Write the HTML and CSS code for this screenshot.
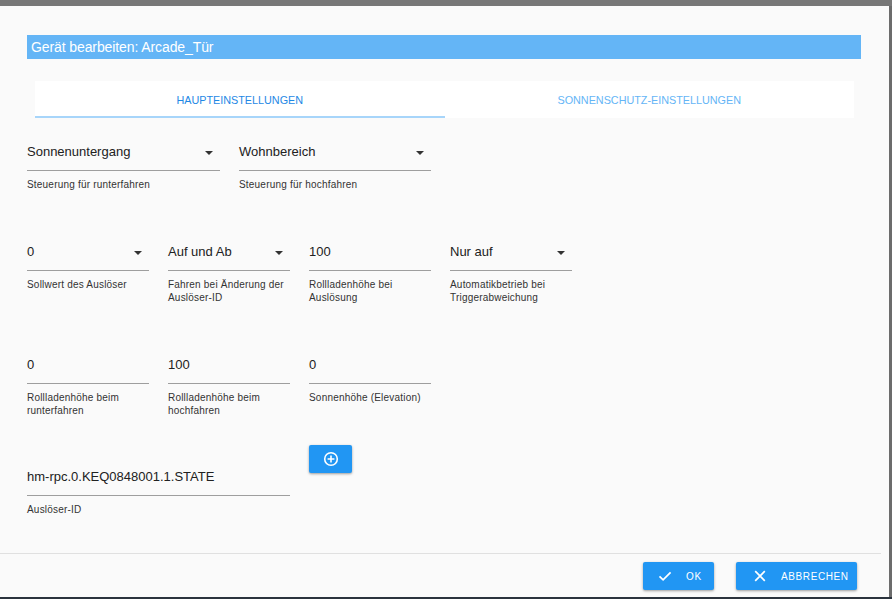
FILE: index.html
```html
<!DOCTYPE html>
<html lang="de">
<head>
<meta charset="utf-8">
<title>Gerät bearbeiten</title>
<link rel="stylesheet" href="styles.css">
</head>
<body>
<div class="topbar"></div>
<div class="frame">
  <div class="dialog">
    <div class="content">
      <div class="title">Gerät bearbeiten: Arcade_Tür</div>
      <div class="tabs">
        <div class="tab active">Haupteinstellungen</div>
        <div class="tab">Sonnenschutz-Einstellungen</div>
      </div>

      <div class="row">
        <div class="field wide select">
          <div class="value">Sonnenuntergang</div>
          <div class="label">Steuerung für runterfahren</div>
        </div>
        <div class="field wide select">
          <div class="value">Wohnbereich</div>
          <div class="label">Steuerung für hochfahren</div>
        </div>
      </div>

      <div class="row">
        <div class="field select">
          <div class="value">0</div>
          <div class="label">Sollwert des Auslöser</div>
        </div>
        <div class="field select">
          <div class="value">Auf und Ab</div>
          <div class="label">Fahren bei Änderung der Auslöser-ID</div>
        </div>
        <div class="field">
          <div class="value">100</div>
          <div class="label">Rollladenhöhe bei Auslösung</div>
        </div>
        <div class="field select">
          <div class="value">Nur auf</div>
          <div class="label">Automatikbetrieb bei Triggerabweichung</div>
        </div>
      </div>

      <div class="row">
        <div class="field">
          <div class="value">0</div>
          <div class="label">Rollladenhöhe beim runterfahren</div>
        </div>
        <div class="field">
          <div class="value">100</div>
          <div class="label">Rollladenhöhe beim hochfahren</div>
        </div>
        <div class="field">
          <div class="value">0</div>
          <div class="label">Sonnenhöhe (Elevation)</div>
        </div>
      </div>

      <div class="row row-last">
        <div class="field double offset">
          <div class="value">hm-rpc.0.KEQ0848001.1.STATE</div>
          <div class="label">Auslöser-ID</div>
        </div>
        <button class="btn add-btn" type="button" aria-label="Hinzufügen">
          <svg width="16" height="16" viewBox="0 0 16 16"><circle cx="8" cy="8" r="6.3" fill="none" stroke="#fff" stroke-width="1.6"/><path d="M8 4.6v6.8M4.6 8h6.8" stroke="#fff" stroke-width="1.6"/></svg>
        </button>
      </div>
    </div>

    <div class="footer">
      <button class="btn action ok" type="button">
        <svg width="14" height="14" viewBox="0 0 14 14"><path d="M1.5 7.3l3.6 3.6L12.6 3.4" fill="none" stroke="#fff" stroke-width="1.7"/></svg>
        <span>OK</span>
      </button>
      <button class="btn action cancel" type="button">
        <svg width="14" height="14" viewBox="0 0 14 14"><path d="M2.2 2.2l9.6 9.6M11.8 2.2l-9.6 9.6" fill="none" stroke="#fff" stroke-width="1.7"/></svg>
        <span>Abbrechen</span>
      </button>
    </div>
  </div>
  <div class="side"></div>
</div>
<div class="bottombar"></div>
</body>
</html>
```

FILE: styles.css
```css
* { box-sizing: border-box; }
html, body { margin: 0; padding: 0; }
body {
  width: 892px;
  height: 599px;
  overflow: hidden;
  background: #757575;
  font-family: "Liberation Sans", Arial, sans-serif;
  display: flex;
  flex-direction: column;
}
.topbar { height: 6px; background: #777777; flex: none; }
.frame { display: flex; height: 591px; flex: none; }
.side { flex: 1; background: #6c6c6c; }
.bottombar { height: 2px; background: #2b333d; flex: none; }

.dialog {
  width: 889px;
  height: 591px;
  background: #fafafa;
  display: flex;
  flex-direction: column;
}
.content {
  flex: 1;
  padding: 29px 28px 0 27px;
}
.title {
  height: 24px;
  line-height: 24px;
  background: #64b5f6;
  color: #fff;
  font-size: 14px;
  letter-spacing: -0.1px;
  padding-left: 4px;
}
.tabs {
  display: flex;
  margin: 22px 7px 0 8px;
  height: 37px;
  background: #fff;
}
.tab {
  flex: 1;
  display: flex;
  align-items: center;
  justify-content: center;
  text-transform: uppercase;
  font-size: 10.8px;
  color: #64b5f6;
  border-bottom: 2px solid transparent;
  padding-top: 2px;
}
.tab.active {
  color: #1e88e5;
  border-bottom-color: #a7d5fa;
}

.row {
  display: flex;
  gap: 19px;
  align-items: flex-start;
  margin-top: 50px;
}
.tabs + .row { margin-top: 23px; }
.row-last { margin-top: 28px; }

.field { width: 122px; position: relative; }
.field.wide { width: 193px; }
.field.wide + .field.wide { width: 192px; }
.field.double { width: 263px; }
.field.offset { margin-top: 21px; }

.value {
  line-height: 20px;
  font-size: 13px;
  color: #212121;
  padding-top: 1px;
  padding-bottom: 8px;
  height: 30px;
  border-bottom: 1px solid #9e9e9e;
  white-space: nowrap;
}
.select .value { padding-right: 20px; }
.select::after {
  content: "";
  position: absolute;
  right: 7px;
  top: 10px;
  border-left: 4px solid transparent;
  border-right: 4px solid transparent;
  border-top: 4px solid #333;
}
.label {
  margin-top: 7px;
  font-size: 10px;
  line-height: 13px;
  color: #333;
  letter-spacing: 0.2px;
}

.btn {
  border: 0;
  background: #2196f3;
  color: #fff;
  border-radius: 2px;
  box-shadow: 0 1px 3px rgba(0,0,0,0.25), 0 1px 2px rgba(0,0,0,0.15);
  font-family: inherit;
  padding: 0;
  display: flex;
  align-items: center;
  justify-content: center;
  cursor: pointer;
}
.add-btn { width: 43px; height: 28px; }
.add-btn svg { display: block; }

.footer {
  height: 44px;
  margin-right: 8px;
  border-top: 1px solid #e0e0e0;
  display: flex;
  justify-content: flex-end;
  align-items: flex-start;
  padding: 8px 24px 0 0;
  gap: 22px;
}
.action {
  height: 28px;
  font-size: 10px;
  letter-spacing: 0.6px;
  text-transform: uppercase;
  justify-content: flex-start;
}
.action svg { display: block; flex: none; }
.ok { width: 71px; padding-left: 15px; }
.ok span { margin-left: 14px; }
.cancel { width: 121px; padding-left: 17px; }
.cancel span { margin-left: 14px; }
```
